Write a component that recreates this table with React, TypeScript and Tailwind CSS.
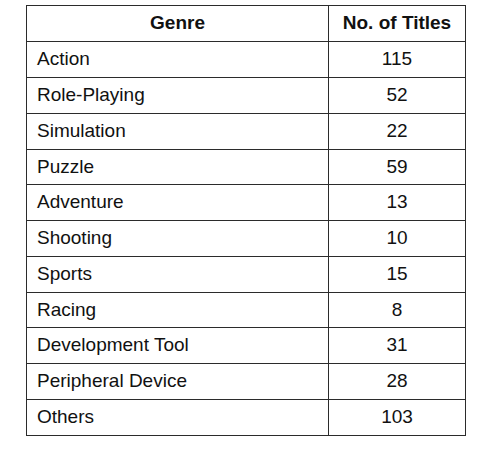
import React from "react";

const rows: { genre: string; n: string; h: string }[] = [
  { genre: "Action", n: "115", h: "h-[36px]" },
  { genre: "Role-Playing", n: "52", h: "h-[36px]" },
  { genre: "Simulation", n: "22", h: "h-[36px]" },
  { genre: "Puzzle", n: "59", h: "h-[35px]" },
  { genre: "Adventure", n: "13", h: "h-[36px]" },
  { genre: "Shooting", n: "10", h: "h-[36px]" },
  { genre: "Sports", n: "15", h: "h-[36px]" },
  { genre: "Racing", n: "8", h: "h-[35px]" },
  { genre: "Development Tool", n: "31", h: "h-[36px]" },
  { genre: "Peripheral Device", n: "28", h: "h-[36px]" },
  { genre: "Others", n: "103", h: "h-[35px]" },
];

export default function App() {
  return (
    <div className="w-[490px] h-[461px] bg-white pt-[5px] pl-[26px] text-[19px] leading-none text-[#111]" style={{ fontFamily: '"Liberation Sans", Arial, sans-serif' }}>
      <div className="w-[440px] border border-[#2b2b2b] flex flex-col">
        <div className="flex h-[36px] border-b border-[#2b2b2b] font-bold">
          <div className="w-[302px] border-r border-[#2b2b2b] flex items-center justify-center pb-[2px]">Genre</div>
          <div className="flex-1 flex items-center justify-center pb-[2px]">No. of Titles</div>
        </div>
        {rows.map((r, i) => (
          <div key={r.genre} className={`flex ${r.h} ${i < rows.length - 1 ? "border-b border-[#2b2b2b]" : ""}`}>
            <div className="w-[302px] border-r border-[#2b2b2b] flex items-center pl-[10px] pb-[2px]">{r.genre}</div>
            <div className="flex-1 flex items-center justify-center pb-[2px]">{r.n}</div>
          </div>
        ))}
      </div>
    </div>
  );
}
